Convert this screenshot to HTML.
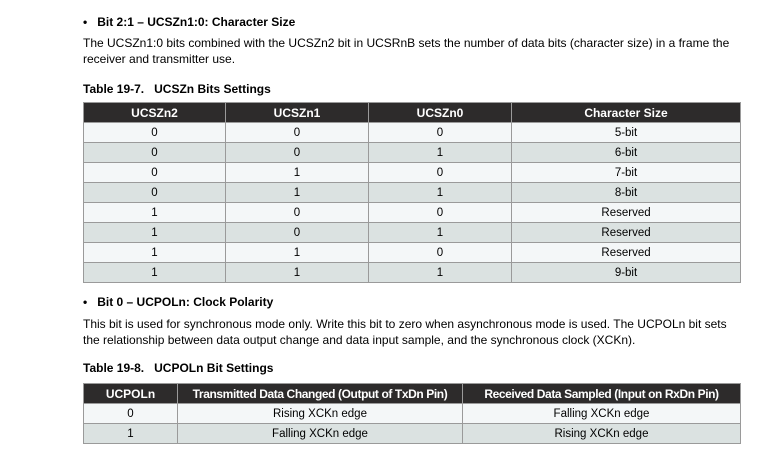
<!DOCTYPE html>
<html><head><style>
body{margin:0;width:774px;height:457px;background:#fff;font-family:"Liberation Sans",Arial,sans-serif;color:#000;position:relative;overflow:hidden}
.t{position:absolute;left:83px;font-size:12px;white-space:nowrap}
.b{font-weight:bold}
table{position:absolute;left:83px;border-collapse:collapse;font-size:11.5px;table-layout:fixed}
td,th{border:1px solid #9a9a9a;text-align:center;padding:0;height:19px}
th{background:#2d2b2b;color:#fff;font-weight:bold;font-size:12px;border-color:#9a9a9a}
tr:nth-child(odd) td{background:#dbe2e1}
tr:nth-child(even) td{background:#f4f7f8}
</style></head><body>
<div class="t b" style="top:15px">•&nbsp;&nbsp;&nbsp;Bit 2:1 – UCSZn1:0: Character Size</div>
<div class="t" style="top:35px;line-height:16px;width:660px;white-space:normal">The UCSZn1:0 bits combined with the UCSZn2 bit in UCSRnB sets the number of data bits (character size) in a frame the receiver and transmitter use.</div>
<div class="t b" style="top:82px">Table 19-7.&nbsp;&nbsp; UCSZn Bits Settings</div>
<table style="top:102px;width:657px">
<colgroup><col style="width:142px"><col style="width:143px"><col style="width:143px"><col style="width:229px"></colgroup>
<tr><th>UCSZn2</th><th>UCSZn1</th><th>UCSZn0</th><th>Character Size</th></tr>
<tr><td>0</td><td>0</td><td>0</td><td>5-bit</td></tr>
<tr><td>0</td><td>0</td><td>1</td><td>6-bit</td></tr>
<tr><td>0</td><td>1</td><td>0</td><td>7-bit</td></tr>
<tr><td>0</td><td>1</td><td>1</td><td>8-bit</td></tr>
<tr><td>1</td><td>0</td><td>0</td><td>Reserved</td></tr>
<tr><td>1</td><td>0</td><td>1</td><td>Reserved</td></tr>
<tr><td>1</td><td>1</td><td>0</td><td>Reserved</td></tr>
<tr><td>1</td><td>1</td><td>1</td><td>9-bit</td></tr>
</table>
<div class="t b" style="top:295px">•&nbsp;&nbsp;&nbsp;Bit 0 – UCPOLn: Clock Polarity</div>
<div class="t" style="top:316px;line-height:16px;width:655px;white-space:normal">This bit is used for synchronous mode only. Write this bit to zero when asynchronous mode is used. The UCPOLn bit sets the relationship between data output change and data input sample, and the synchronous clock (XCKn).</div>
<div class="t b" style="top:361px">Table 19-8.&nbsp;&nbsp; UCPOLn Bit Settings</div>
<table style="top:383px;width:657px">
<colgroup><col style="width:94px"><col style="width:285px"><col style="width:278px"></colgroup>
<tr><th>UCPOLn</th><th style="letter-spacing:-0.4px">Transmitted Data Changed (Output of TxDn Pin)</th><th style="letter-spacing:-0.4px">Received Data Sampled (Input on RxDn Pin)</th></tr>
<tr><td style="background:#f4f7f8">0</td><td style="background:#f4f7f8">Rising XCKn edge</td><td style="background:#f4f7f8">Falling XCKn edge</td></tr>
<tr><td style="background:#dbe2e1">1</td><td style="background:#dbe2e1">Falling XCKn edge</td><td style="background:#dbe2e1">Rising XCKn edge</td></tr>
</table>
</body></html>
